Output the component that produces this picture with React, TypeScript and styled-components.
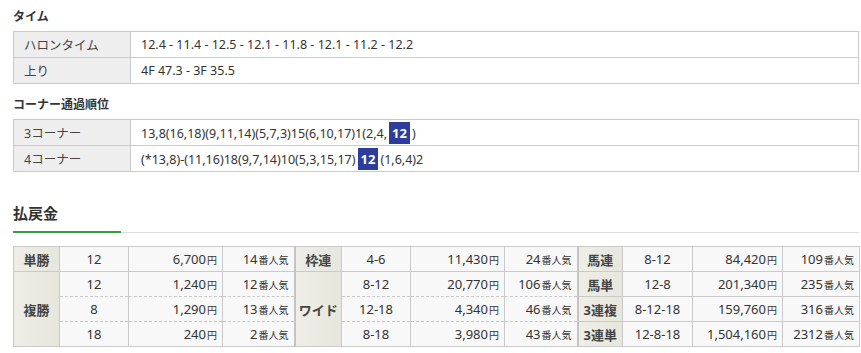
import React from "react";
import styled, { createGlobalStyle } from "styled-components";

const Global = createGlobalStyle`
  html, body { margin: 0; padding: 0; background: #fff; }
  body { font-family: "Noto Sans", "Noto Sans CJK JP", sans-serif; color: #333; }
`;

const Page = styled.div`
  width: 861px;
  padding: 9px 2px 0 13px;
  box-sizing: border-box;
`;

const SubTitle = styled.h3<{ $top?: number }>`
  margin: ${(p) => p.$top ?? 0}px 0 6px 0;
  font-size: 12px;
  line-height: 16px;
  font-weight: bold;
  color: #333;
`;

const InfoTable = styled.table`
  width: 846px;
  border-collapse: collapse;
  table-layout: fixed;
  font-size: 12.5px;
`;

const InfoLabel = styled.th`
  width: 106px;
  height: 25px;
  padding: 0 0 0 10px;
  text-align: left;
  font-weight: normal;
  background: #eeeeee;
  border: 1px solid #cacaca;
  color: #444;
`;

const InfoValue = styled.td`
  height: 25px;
  padding: 0 0 0 10px;
  background: #fff;
  border: 1px solid #cacaca;
  color: #333;
`;

const Mark = styled.span`
  display: inline-block;
  background: #2e3c9c;
  color: #fff;
  font-weight: bold;
  padding: 0 3px;
  margin: 0 2px;
  line-height: 22px;
  font-size: 13px;
`;

const PayHead = styled.div`
  display: flex;
  align-items: flex-end;
  margin-top: 31px;
`;

const PayTitle = styled.h2`
  margin: 0;
  width: 108px;
  padding: 0 0 8px 0;
  font-size: 15px;
  line-height: 20px;
  font-weight: 600;
  color: #333;
  border-bottom: 2px solid #3a9c40;
`;

const PayRule = styled.div`
  flex: 1;
  border-bottom: 1px solid #dddddd;
`;

const PayTable = styled.table`
  margin-top: 13px;
  width: 846px;
  border-collapse: collapse;
  table-layout: fixed;
  font-size: 13px;
`;

const BetLabel = styled.th<{ $sep?: boolean }>`
  height: 24px;
  padding: 0;
  text-align: center;
  font-size: 13px;
  font-weight: bold;
  color: #444;
  background: linear-gradient(to right, #eeeee7, #e6e6dc);
  border: 1px solid #cacaca;
  border-left: ${(p) => (p.$sep ? "2px solid #c4c4c4" : "1px solid #cacaca")};
`;

const Cell = styled.td<{ $align: "center" | "right"; $dashTop?: boolean; $dashBottom?: boolean }>`
  height: 24px;
  padding: ${(p) => (p.$align === "right" ? "0 5px 0 0" : "0")};
  text-align: ${(p) => p.$align};
  background: #f8f8f8;
  color: #333;
  border: 1px solid #cacaca;
  ${(p) => (p.$dashTop ? "border-top: 1px dashed #cacaca;" : "")}
  ${(p) => (p.$dashBottom ? "border-bottom: 1px dashed #cacaca;" : "")}
  white-space: nowrap;
`;

const Unit = styled.span`
  font-size: 10px;
  margin-left: 1px;
`;

type Bet = {
  horse: string;
  pay: string;
  rank: string;
};

const colWidths = [46, 69, 94, 72, 47, 69, 94, 73, 45, 70, 90, 77];

const g1: Bet[] = [
  { horse: "12", pay: "6,700", rank: "14" },
  { horse: "12", pay: "1,240", rank: "12" },
  { horse: "8", pay: "1,290", rank: "13" },
  { horse: "18", pay: "240", rank: "2" },
];
const g2: Bet[] = [
  { horse: "4-6", pay: "11,430", rank: "24" },
  { horse: "8-12", pay: "20,770", rank: "106" },
  { horse: "12-18", pay: "4,340", rank: "46" },
  { horse: "8-18", pay: "3,980", rank: "43" },
];
const g3: Bet[] = [
  { horse: "8-12", pay: "84,420", rank: "109" },
  { horse: "12-8", pay: "201,340", rank: "235" },
  { horse: "8-12-18", pay: "159,760", rank: "316" },
  { horse: "12-8-18", pay: "1,504,160", rank: "2312" },
];
const g3Labels = ["馬連", "馬単", "3連複", "3連単"];

function BetCells({ bet, dashTop, dashBottom }: { bet: Bet; dashTop?: boolean; dashBottom?: boolean }) {
  return (
    <>
      <Cell $align="center" $dashTop={dashTop} $dashBottom={dashBottom}>{bet.horse}</Cell>
      <Cell $align="right" $dashTop={dashTop} $dashBottom={dashBottom}>
        {bet.pay}
        <Unit>円</Unit>
      </Cell>
      <Cell $align="right" $dashTop={dashTop} $dashBottom={dashBottom}>
        {bet.rank}
        <Unit>番人気</Unit>
      </Cell>
    </>
  );
}

export default function App() {
  return (
    <Page>
      <Global />
      <SubTitle>タイム</SubTitle>
      <InfoTable>
        <tbody>
          <tr>
            <InfoLabel>ハロンタイム</InfoLabel>
            <InfoValue>12.4 - 11.4 - 12.5 - 12.1 - 11.8 - 12.1 - 11.2 - 12.2</InfoValue>
          </tr>
          <tr>
            <InfoLabel>上り</InfoLabel>
            <InfoValue>4F 47.3 - 3F 35.5</InfoValue>
          </tr>
        </tbody>
      </InfoTable>

      <SubTitle $top={13}>コーナー通過順位</SubTitle>
      <InfoTable>
        <tbody>
          <tr>
            <InfoLabel>3コーナー</InfoLabel>
            <InfoValue>
              13,8(16,18)(9,11,14)(5,7,3)15(6,10,17)1(2,4,<Mark>12</Mark>)
            </InfoValue>
          </tr>
          <tr>
            <InfoLabel>4コーナー</InfoLabel>
            <InfoValue>
              (*13,8)-(11,16)18(9,7,14)10(5,3,15,17)<Mark>12</Mark>(1,6,4)2
            </InfoValue>
          </tr>
        </tbody>
      </InfoTable>

      <PayHead>
        <PayTitle>払戻金</PayTitle>
        <PayRule />
      </PayHead>

      <PayTable>
        <colgroup>
          {colWidths.map((w, i) => (
            <col key={i} style={{ width: w }} />
          ))}
        </colgroup>
        <tbody>
          <tr>
            <BetLabel>単勝</BetLabel>
            <BetCells bet={g1[0]} />
            <BetLabel $sep>枠連</BetLabel>
            <BetCells bet={g2[0]} />
            <BetLabel $sep>{g3Labels[0]}</BetLabel>
            <BetCells bet={g3[0]} />
          </tr>
          {[1, 2, 3].map((i) => (
            <tr key={i}>
              {i === 1 && <BetLabel rowSpan={3}>複勝</BetLabel>}
              <BetCells bet={g1[i]} dashTop={i > 1} dashBottom={i < 3} />
              {i === 1 && (
                <BetLabel $sep rowSpan={3}>
                  ワイド
                </BetLabel>
              )}
              <BetCells bet={g2[i]} dashTop={i > 1} dashBottom={i < 3} />
              <BetLabel $sep>{g3Labels[i]}</BetLabel>
              <BetCells bet={g3[i]} />
            </tr>
          ))}
        </tbody>
      </PayTable>
    </Page>
  );
}
